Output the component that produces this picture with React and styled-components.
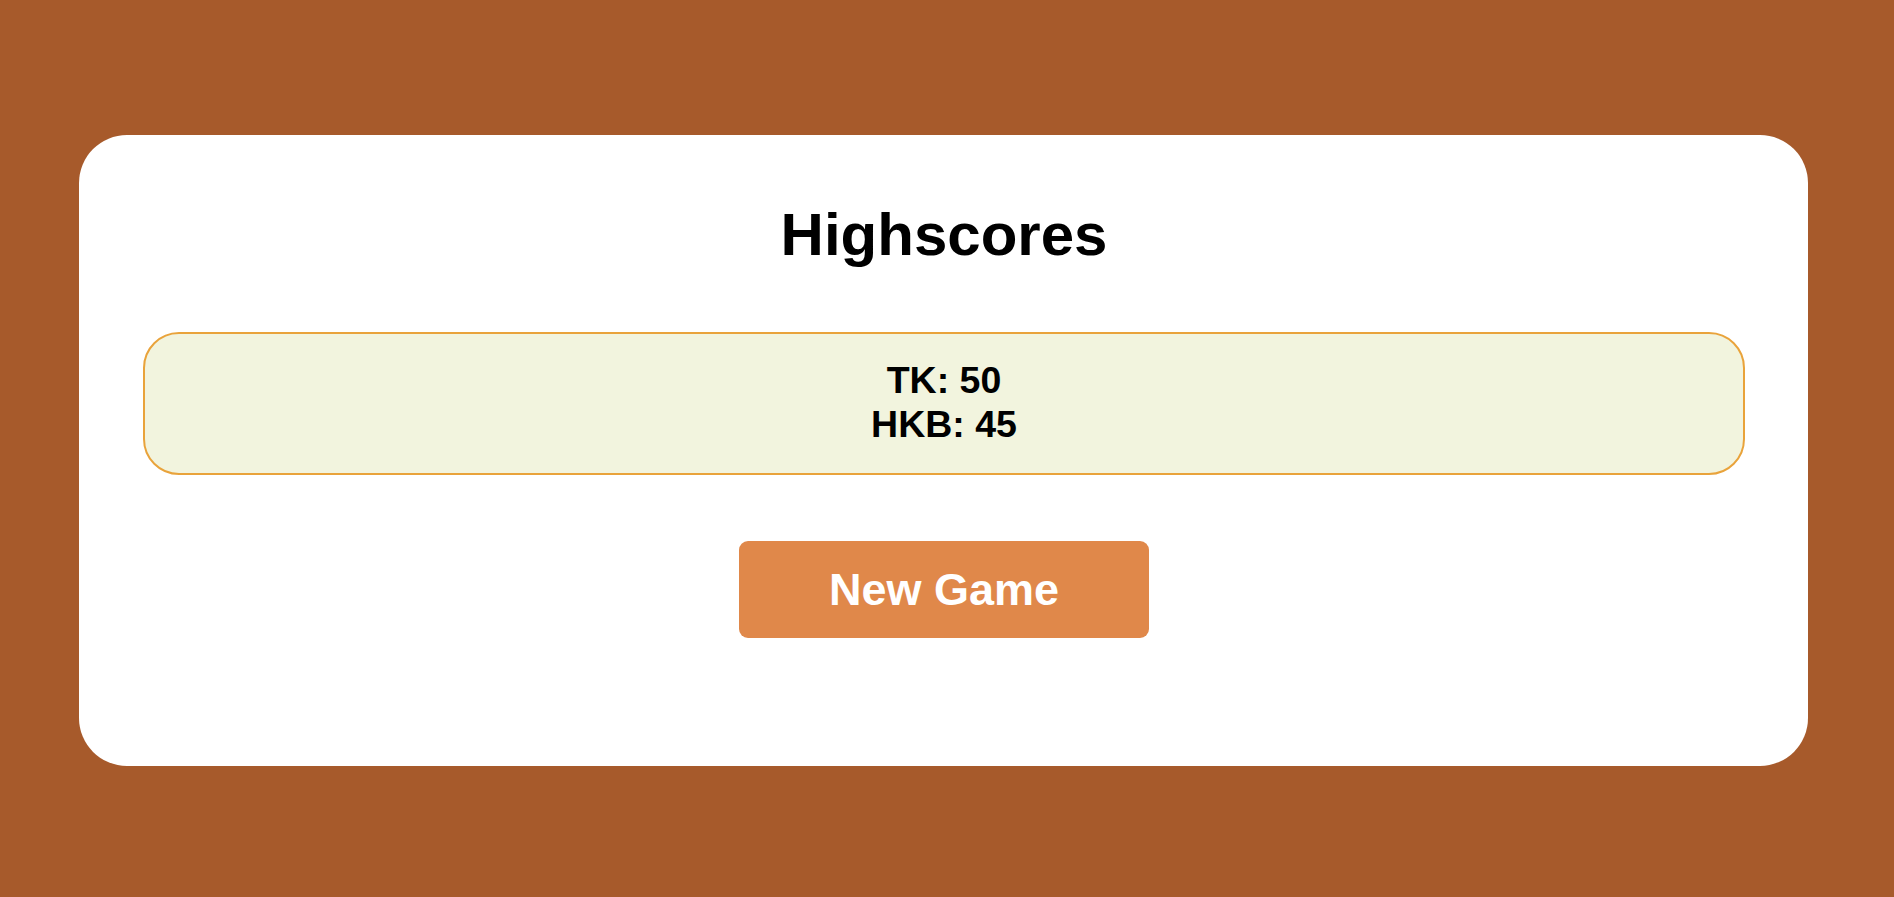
import styled, { createGlobalStyle } from "styled-components";

const scores = [
  { name: "TK", score: 50 },
  { name: "HKB", score: 45 },
];

const App = () => {
  return (
    <>
      <GlobalStyle />
      <Page>
        <Card>
          <Title>Highscores</Title>
          <ScoreBox>
            {scores.map((s) => (
              <ScoreLine key={s.name}>
                {s.name}: {s.score}
              </ScoreLine>
            ))}
          </ScoreBox>
          <NewGameButton>New Game</NewGameButton>
        </Card>
      </Page>
    </>
  );
};

export default App;

const GlobalStyle = createGlobalStyle`
  html, body {
    margin: 0;
    padding: 0;
    background: #a75a2b;
    font-family: "Liberation Sans", Arial, sans-serif;
  }
`;

const Page = styled.div`
  width: 100%;
  min-height: 897px;
  box-sizing: border-box;
  padding: 135px 86px 0 79px;
`;

const Card = styled.div`
  background: #ffffff;
  border-radius: 48px;
  height: 631px;
  box-sizing: border-box;
  padding: 66px 63px 0 64px;
  display: flex;
  flex-direction: column;
  align-items: center;
`;

const Title = styled.h1`
  margin: 0;
  font-size: 60px;
  font-weight: bold;
  color: #000;
  line-height: 67px;
`;

const ScoreBox = styled.div`
  margin-top: 64px;
  width: 100%;
  height: 143px;
  box-sizing: border-box;
  background: #f2f4de;
  border: 2px solid #e9a33b;
  border-radius: 36px;
  padding-top: 24px;
  display: flex;
  flex-direction: column;
  align-items: center;
`;

const ScoreLine = styled.div`
  font-size: 37.5px;
  line-height: 44px;
  font-weight: bold;
  color: #000;
`;

const NewGameButton = styled.button`
  margin-top: 66px;
  width: 410px;
  height: 97px;
  border: none;
  border-radius: 9px;
  background: #e0884a;
  color: #fff;
  font-family: "Liberation Sans", Arial, sans-serif;
  font-size: 45px;
  font-weight: bold;
  cursor: pointer;
  display: flex;
  align-items: center;
  justify-content: center;
`;
